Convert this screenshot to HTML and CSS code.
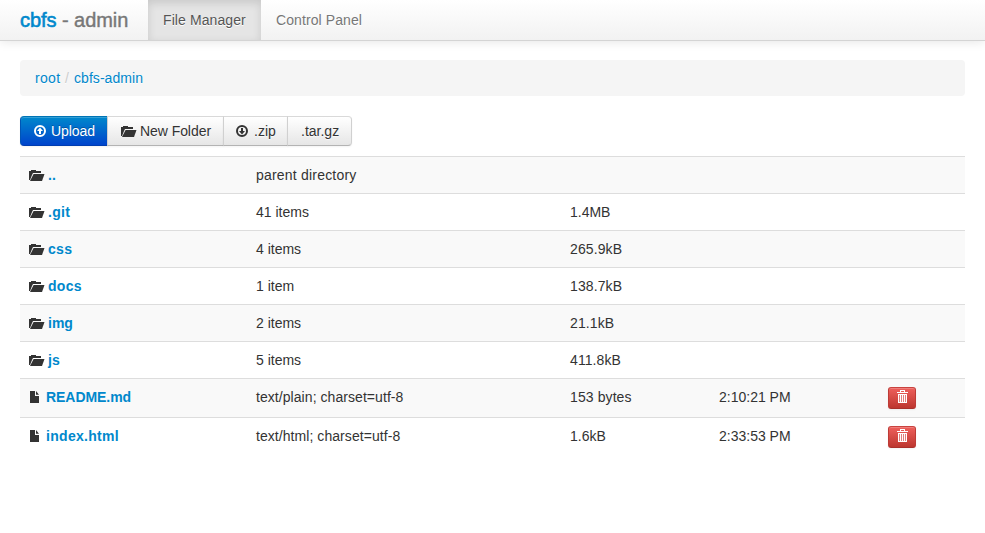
FILE: index.html
```
<!DOCTYPE html>
<html lang="en">
<head>
<meta charset="utf-8">
<title>cbfs - admin</title>
<link rel="stylesheet" href="styles.css">
</head>
<body>
<svg class="defs" width="0" height="0" aria-hidden="true">
  <symbol id="folder" viewBox="0 0 16 12"><path d="M0 10V1h2V0h5v1h5v2H4L3 5 1 10z"/><path d="M4.6 4H15.5L13 11H1z"/></symbol>
  <symbol id="file" viewBox="0 0 9 12"><path d="M0 0h5v5h4v7H0z"/><path d="M6 0l3 3.8H6z"/></symbol>
  <symbol id="up" viewBox="0 0 12 12"><circle cx="6" cy="6" r="5" fill="none" stroke="currentColor" stroke-width="2"/><path d="M6 2.6L9 6H7v3H5V6H3z"/></symbol>
  <symbol id="down" viewBox="0 0 12 12"><circle cx="6" cy="6" r="5" fill="none" stroke="currentColor" stroke-width="2"/><path d="M6 9.4L9 6H7V3H5v3H3z"/></symbol>
  <symbol id="trash" viewBox="0 0 11 13"><path d="M3 0h5v2h3v1H0V2h3zM4 1v1h3V1z" fill-rule="evenodd"/><path d="M1 4h9v9H1z"/><path d="M2.5 5v7M4.5 5v7M6.5 5v7M8.5 5v7" stroke="#d9605c" stroke-width=".8"/></symbol>
</svg>
<header class="navbar">
  <a class="brand"><span class="brand-name">cbfs</span> - admin</a>
  <nav class="nav"><a class="active"><span class="t-fm">File Manager</span></a><a><span class="t-cp">Control Panel</span></a></nav>
</header>
<main class="container">
  <div class="breadcrumb"><a class="t-root">root</a><span class="divider">/</span><a class="t-admin">cbfs-admin</a></div>
  <div class="toolbar">
    <button class="btn primary"><svg class="icon circle"><use href="#up"/></svg><span>Upload</span></button>
    <button class="btn new"><svg class="icon folder"><use href="#folder"/></svg><span>New Folder</span></button>
    <button class="btn zip"><svg class="icon circle"><use href="#down"/></svg><span>.zip</span></button>
    <button class="btn tar"><span>.tar.gz</span></button>
  </div>
  <table class="files">
    <colgroup><col class="c-name"><col class="c-type"><col class="c-size"><col class="c-time"><col class="c-action"></colgroup>
    <tbody>
    <tr><td><a class="entry"><svg class="icon folder"><use href="#folder"/></svg><b>..</b></a></td><td><span class="t-parent">parent directory</span></td><td></td><td></td><td></td></tr>
    <tr><td><a class="entry"><svg class="icon folder"><use href="#folder"/></svg><b class="t-dir">.git</b></a></td><td>41 items</td><td>1.4MB</td><td></td><td></td></tr>
    <tr><td><a class="entry"><svg class="icon folder"><use href="#folder"/></svg><b class="t-dir">css</b></a></td><td>4 items</td><td><span class="t-size">265.9kB</span></td><td></td><td></td></tr>
    <tr><td><a class="entry"><svg class="icon folder"><use href="#folder"/></svg><b class="t-dir">docs</b></a></td><td>1 item</td><td><span class="t-size">138.7kB</span></td><td></td><td></td></tr>
    <tr><td><a class="entry"><svg class="icon folder"><use href="#folder"/></svg><b>img</b></a></td><td>2 items</td><td><span class="t-size">21.1kB</span></td><td></td><td></td></tr>
    <tr><td><a class="entry"><svg class="icon folder"><use href="#folder"/></svg><b>js</b></a></td><td>5 items</td><td><span class="t-size">411.8kB</span></td><td></td><td></td></tr>
    <tr class="tall"><td><a class="entry"><svg class="icon file"><use href="#file"/></svg><b class="t-readme">README.md</b></a></td><td><span class="t-mime">text/plain; charset=utf-8</span></td><td><span class="t-size">153 bytes</span></td><td>2:10:21 PM</td><td><button class="delete" aria-label="Delete"><svg class="icon trash"><use href="#trash"/></svg></button></td></tr>
    <tr class="tall"><td><a class="entry"><svg class="icon file"><use href="#file"/></svg><b class="t-index">index.html</b></a></td><td><span class="t-mime">text/html; charset=utf-8</span></td><td>1.6kB</td><td>2:33:53 PM</td><td><button class="delete" aria-label="Delete"><svg class="icon trash"><use href="#trash"/></svg></button></td></tr>
    </tbody>
  </table>
</main>
</body>
</html>
```
FILE: styles.css
```
* { box-sizing: border-box; }
body { margin: 0; background: #fff; color: #333; font: 14px/20px "Liberation Sans", Arial, sans-serif; }
.defs { display: block; width: 0; height: 0; }
a { color: #08c; text-decoration: none; }
.navbar { display: flex; height: 41px; padding-left: 20px; background: linear-gradient(#fff, #f2f2f2); border-bottom: 1px solid #d4d4d4; box-shadow: 0 1px 10px rgba(0,0,0,.1); }
.brand { width: 128px; padding-top: 10px; color: #777; font-size: 20px; line-height: 20px; text-shadow: 0 1px 0 #fff; white-space: nowrap; -webkit-text-stroke: .4px; letter-spacing: -.05px; }
.brand-name { color: #08c; -webkit-text-stroke: .6px; }
.nav { display: flex; }
.nav a { padding: 10px 15px; color: #777; text-shadow: 0 1px 0 #fff; white-space: nowrap; }
.nav .active { width: 113px; color: #555; background: #e5e5e5; box-shadow: inset 0 3px 8px rgba(0,0,0,.125); }
.t-fm, .t-cp { letter-spacing: .09px; }
.container { padding: 19px 20px 0; }
.breadcrumb { display: flex; height: 36px; padding: 8px 15px; background: #f5f5f5; border-radius: 4px; text-shadow: 0 1px 0 #fff; }
.divider { width: 13px; padding-left: 4px; color: #ccc; }
.t-root { width: 26px; letter-spacing: .3px; }
.t-admin { letter-spacing: .05px; }
.toolbar { display: flex; height: 30px; margin: 20px 0 10px; }
.btn { display: flex; align-items: center; height: 30px; margin: 0 0 0 -1px; padding: 0 12px; border: 1px solid; border-color: #d9d9d9 #d0d0d0 #b3b3b3; background: linear-gradient(#fff, #e6e6e6); box-shadow: inset 0 1px 0 rgba(255,255,255,.2), 0 1px 2px rgba(0,0,0,.05); color: #333; font: inherit; text-shadow: 0 1px 1px rgba(255,255,255,.75); white-space: nowrap; }
.btn.primary { width: 88px; margin: 0; padding-left: 13px; border-color: #0074b5 #0055b5 #003db0; border-radius: 4px 0 0 4px; background: linear-gradient(#08c, #04c); color: #fff; text-shadow: 0 -1px 0 rgba(0,0,0,.25); letter-spacing: -.08px; }
.new { width: 117px; letter-spacing: -.06px; }
.zip { width: 65px; }
.zip span { margin-left: 1px; }
.tar { width: 65px; padding-left: 13px; border-radius: 0 4px 4px 0; }
.icon { flex: none; display: block; fill: currentColor; overflow: visible; }
.circle { width: 12px; height: 12px; margin-right: 5px; }
.folder { width: 16px; height: 12px; margin-right: 3px; }
.new .folder { margin-top: 2px; margin-left: 1px; }
.file { width: 9px; height: 12px; margin: 0 7px 0 2px; }
.files { width: 945px; border-collapse: separate; border-spacing: 0; table-layout: fixed; }
.c-name { width: 228px; }
.c-type { width: 314px; }
.c-size { width: 149px; }
.c-time { width: 169px; }
.c-action { width: 85px; }
td { height: 37px; padding: 8px; border-top: 1px solid #ddd; vertical-align: top; white-space: nowrap; }
tr:nth-child(odd) td { background: #f9f9f9; }
.tall td { height: 39px; }
.t-parent { letter-spacing: .2px; }
.t-mime { letter-spacing: .06px; }
.t-size { letter-spacing: .1px; }
.t-dir { letter-spacing: .3px; }
.t-readme { letter-spacing: -.05px; }
.t-index { letter-spacing: .3px; }
.entry { display: flex; align-items: center; }
.entry .icon { color: #333; }
.entry .folder { margin-top: 2px; margin-left: 1px; }
.delete { display: flex; align-items: flex-start; justify-content: center; width: 28px; height: 22px; padding: 2px 0 0; border: 1px solid; border-color: #c9433f #bd3b36 #a9302b; border-radius: 3px; background: linear-gradient(#ee5f5b, #bd362f); box-shadow: inset 0 1px 0 rgba(255,255,255,.2), 0 1px 2px rgba(0,0,0,.05); color: #fff; }
.trash { width: 11px; height: 13px; margin-left: 1px; }
```
